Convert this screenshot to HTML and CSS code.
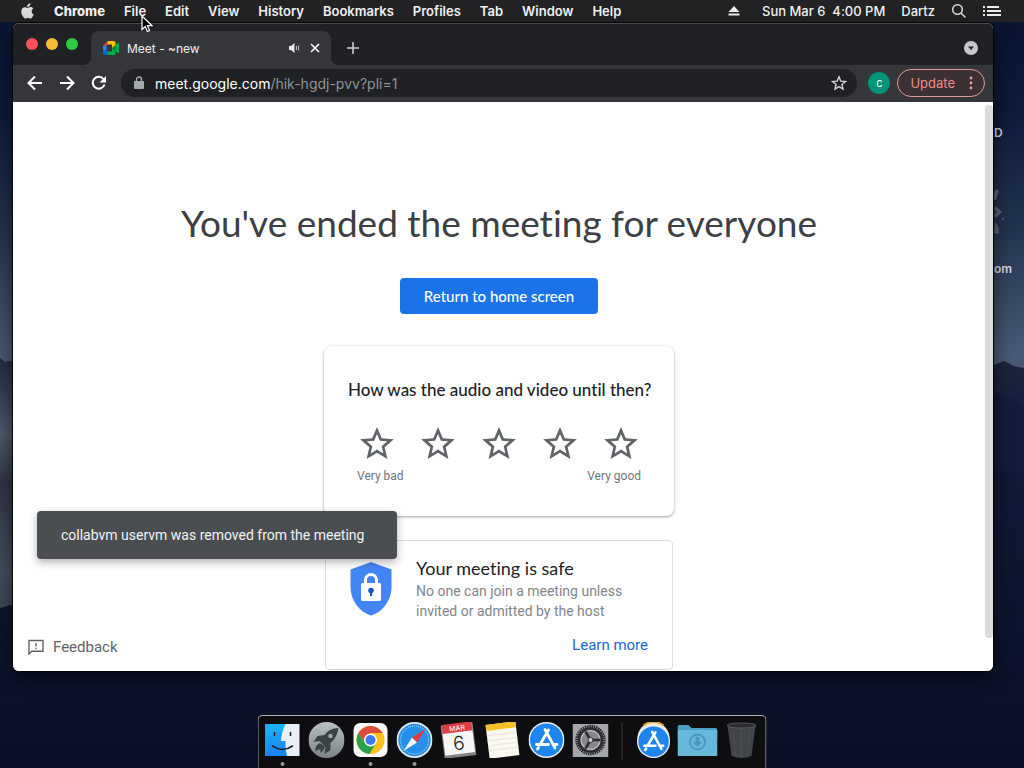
FILE: index.html
```html
<!DOCTYPE html>
<html lang="en">
<head>
<meta charset="utf-8">
<title>Meet - ~new</title>
<link rel="stylesheet" href="styles.css">
</head>
<body>
<div class="desktop">
  <svg class="wallpaper" viewBox="0 0 1024 768" preserveAspectRatio="none" aria-hidden="true">
    <defs>
      <linearGradient id="sky" x1="0" y1="0" x2="0" y2="1">
        <stop offset="0" stop-color="#0a1430"/><stop offset=".15" stop-color="#0e1a3c"/><stop offset=".3" stop-color="#24344f"/><stop offset=".46" stop-color="#4a5a76"/><stop offset=".7" stop-color="#414a60"/><stop offset="1" stop-color="#3a4358"/>
      </linearGradient>
      <linearGradient id="land" x1="0" y1="0" x2="0" y2="1">
        <stop offset="0" stop-color="#1c2440"/><stop offset=".25" stop-color="#121938"/><stop offset="1" stop-color="#0a1126"/>
      </linearGradient>
      <linearGradient id="mist" x1="0" y1="0" x2="0" y2="1">
        <stop offset="0" stop-color="#252c45"/><stop offset=".12" stop-color="#353c54"/><stop offset=".3" stop-color="#515b6e"/><stop offset=".5" stop-color="#2f3649"/><stop offset=".85" stop-color="#464f61"/><stop offset="1" stop-color="#3c4558"/>
      </linearGradient>
    </defs>
    <rect width="1024" height="768" fill="url(#sky)"/>
    <path fill="url(#mist)" d="M0 358 L5 362 L10 361 L40 370 V610 H0Z"/>
    <path fill="url(#land)" d="M0 608 L14 604 L500 640 L985 370 L994 365 L1004 361 L1014 366 L1024 368 V768 H0Z"/>
    <path fill="#141a3a" d="M990 392 Q1010 396 1024 408 V470 H990Z"/>
  </svg>

  <div class="desk-icons">
    <span class="desk-label">D</span>
    <span class="desk-glyphs">
      <svg width="12" height="48" viewBox="0 0 12 48" fill="#59647b"><path d="M2 0l3 2-3 9H0V4zM2 17l6 6-6 6-2-3 3-3-3-3zM1 34q5 3 4 11l-5-1z"/><circle cx="9" cy="30" r="1"/></svg>
    </span>
    <span class="desk-label">om</span>
  </div>

  <header class="menubar">
    <nav class="menus">
      <svg class="apple" width="15" height="16" viewBox="0 0 15 16" fill="#dedede"><path d="M10.4.2c.1 1.100-.3 2-1 2.700-.6.700-1.500 1.100-2.300 1C7 2.900 7.400 2 8 1.400 8.600.7 9.600.3 10.400.2zM13.400 5.600c-1.200.8-1.700 1.700-1.700 2.900 0 1.400.8 2.500 2 3-.3.900-.7 1.700-1.300 2.500-.7 1-1.300 1.600-2.200 1.600-.8 0-1.200-.5-2.300-.5s-1.500.5-2.300.5c-.9 0-1.600-.7-2.300-1.700C2.200 12.500 1.300 10.900 1.300 8.500c0-2.700 1.700-4.300 3.500-4.300 1.100 0 1.900.7 2.700.7.700 0 1.600-.8 3-.8 1.100 0 2.200.5 2.900 1.500z"/></svg>
      <button class="menu app">Chrome</button>
      <button class="menu">File</button>
      <button class="menu">Edit</button>
      <button class="menu">View</button>
      <button class="menu">History</button>
      <button class="menu">Bookmarks</button>
      <button class="menu">Profiles</button>
      <button class="menu">Tab</button>
      <button class="menu">Window</button>
      <button class="menu">Help</button>
    </nav>
    <div class="status">
      <svg class="eject" width="12" height="12" viewBox="0 0 12 12" fill="#eee"><path d="M6 1l5.500 6H.5zM.5 8.500h11v2H.5z"/></svg>
      <span class="clock">Sun Mar 6&nbsp; 4:00 PM</span>
      <span class="user">Dartz</span>
      <svg width="16" height="16" viewBox="0 0 16 16" fill="none" stroke="#ddd" stroke-width="1.500"><circle cx="6.500" cy="6.500" r="4.800"/><path d="M10 10l4.500 4.500"/></svg>
      <svg width="18" height="12" viewBox="0 0 18 12" fill="#eee"><path d="M0 1h2v2H0zM0 5h2v2H0zM0 9h2v2H0zM4 1h12v2H4zM4 5h14v2H4zM4 9h14v2H4z"/></svg>
    </div>
  </header>

  <main class="window">
    <div class="tabstrip">
      <div class="lights">
        <button class="light red" aria-label="Close window"></button>
        <button class="light yellow" aria-label="Minimise window"></button>
        <button class="light green" aria-label="Zoom window"></button>
      </div>
      <div class="tab">
        <svg width="16" height="14" viewBox="0 0 16 14"><path fill="#ea4335" d="M0 4.500L4.500 0v4.500z"/><path fill="#fbbc04" d="M4.500 0H11q1.500 0 1.500 1.500V5L9 7.500v-4H4.500z"/><path fill="#2684fc" d="M0 4.500h3.500v5H0z"/><path fill="#0066da" d="M0 9.500h4.500V14H1.500Q0 14 0 12.500z"/><path fill="#00ac47" d="M4.500 10.500H9V7l3.500 2.500v3Q12.500 14 11 14H4.500z"/><path fill="#00832d" d="M9 7l3.500-3v6z"/><path fill="#00ac47" d="M12.500 4L15 2q1-.5 1 .5v9q0 1-1 .5l-2.500-2z"/></svg>
        <span class="tab-title">Meet - ~new</span>
        <svg width="12" height="12" viewBox="0 0 12 12"><path fill="#e8eaed" d="M1 4h2l3.500-3v10L3 8H1z"/><path fill="none" stroke="#bbb" d="M8.500 4v4M10.500 3.500v5"/></svg>
        <button class="icon-btn" aria-label="Close tab"><svg width="10" height="10" viewBox="0 0 10 10" stroke="#fff" stroke-width="1.600"><path d="M1 1l8 8M9 1L1 9"/></svg></button>
      </div>
      <button class="icon-btn new-tab" aria-label="New tab"><svg width="12" height="12" viewBox="0 0 12 12" stroke="#ccc" stroke-width="1.600"><path d="M6 0v12M0 6h12"/></svg></button>
      <button class="icon-btn tab-search" aria-label="Search tabs"><svg width="14" height="14" viewBox="0 0 14 14"><circle cx="7" cy="7" r="7" fill="#c4c7cb"/><path fill="#202124" d="M4 5.500h6L7 9z"/></svg></button>
    </div>

    <div class="toolbar">
      <div class="nav">
        <button class="icon-btn" aria-label="Back"><svg width="16" height="16" viewBox="0 0 16 16" fill="none" stroke="#fff" stroke-width="2"><path d="M15 8H2M8 1.500L1.500 8 8 14.500"/></svg></button>
        <button class="icon-btn" aria-label="Forward"><svg width="16" height="16" viewBox="0 0 16 16" fill="none" stroke="#fff" stroke-width="2"><path d="M1 8h13M8 1.500L14.500 8 8 14.500"/></svg></button>
        <button class="icon-btn" aria-label="Reload"><svg width="16" height="16" viewBox="0 0 16 16"><path fill="none" stroke="#fff" stroke-width="2" d="M13.500 9.500A6 6 0 1 1 12.500 4"/><path fill="#fff" d="M15 1v6.500H8.500z"/></svg></button>
      </div>
      <div class="omnibox">
        <svg width="10" height="14" viewBox="0 0 10 14"><rect y="5" width="10" height="8" rx="1" fill="#a5a8ac"/><path fill="none" stroke="#a5a8ac" stroke-width="1.400" d="M2.500 5.500V3.500a2.500 2.500 0 0 1 5 0v2"/></svg>
        <a class="url" href="#"><span class="host">meet.google.com</span>/hik-hgdj-pvv?pli=1</a>
        <button class="icon-btn" aria-label="Bookmark this tab"><svg width="16" height="16" viewBox="0 0 16 16" fill="none" stroke="#d0d2d5" stroke-width="1.400"><path d="M8 1.800l1.800 4.300 4.700.4-3.600 3 1.100 4.600L8 11.600l-4 2.500 1.100-4.600-3.600-3 4.700-.4z"/></svg></button>
      </div>
      <button class="avatar" aria-label="Profile">c</button>
      <button class="update"><span>Update</span><svg width="4" height="14" viewBox="0 0 4 14" fill="#f0a09a"><circle cx="2" cy="2" r="1.400"/><circle cx="2" cy="7" r="1.400"/><circle cx="2" cy="12" r="1.400"/></svg></button>
    </div>

    <section class="page">
      <div class="content">
        <h1 class="headline">You've ended the meeting for everyone</h1>
        <button class="primary">Return to home screen</button>
        <div class="rating">
          <h2 class="question">How was the audio and video until then?</h2>
          <div class="stars">
            <button class="icon-btn" aria-label="1 star"><svg class="star" viewBox="2 2 20 19"><use href="#star"/></svg></button>
            <button class="icon-btn" aria-label="2 stars"><svg class="star" viewBox="2 2 20 19"><use href="#star"/></svg></button>
            <button class="icon-btn" aria-label="3 stars"><svg class="star" viewBox="2 2 20 19"><use href="#star"/></svg></button>
            <button class="icon-btn" aria-label="4 stars"><svg class="star" viewBox="2 2 20 19"><use href="#star"/></svg></button>
            <button class="icon-btn" aria-label="5 stars"><svg class="star" viewBox="2 2 20 19"><use href="#star"/></svg></button>
          </div>
          <div class="scale"><span>Very bad</span><span>Very good</span></div>
        </div>
        <div class="safe">
          <svg class="shield" width="42" height="54" viewBox="0 0 42 54"><path fill="#4285f4" d="M21 0l20.500 7.500V25C41.500 38 33 50 21 53.500 9 50 .5 38 .5 25V7.500z"/><rect x="11" y="21" width="20" height="18" rx="1.500" fill="#fff"/><path fill="none" stroke="#fff" stroke-width="3" d="M15.500 22v-4a5.500 5.500 0 0 1 11 0v4"/><circle cx="21" cy="28.500" r="2.800" fill="#1a56c4"/><path fill="#1a56c4" d="M20 29h2.200v5H20z"/></svg>
          <div class="safe-body">
            <h2 class="safe-title">Your meeting is safe</h2>
            <p class="safe-text">No one can join a meeting unless invited or admitted by the host</p>
            <a class="learn" href="#">Learn more</a>
          </div>
        </div>
      </div>
      <div class="scroll-thumb"></div>
      <button class="feedback"><svg width="16" height="16" viewBox="0 0 16 16" fill="none" stroke="#5f6368" stroke-width="1.400"><path d="M1 15V1.500h14v10.800H3.600z"/><path d="M8 4v3.500M8 8.800v1.400"/></svg><span>Feedback</span></button>
      <div class="toast" role="status">collabvm uservm was removed from the meeting</div>
    </section>
  </main>

  <footer class="dock">
    <div class="dock-item running"><svg class="dock-icon" viewBox="0 0 36 36"><defs><linearGradient id="fb" x1="0" y1="0" x2="0" y2="1"><stop offset="0" stop-color="#1cb4fb"/><stop offset="1" stop-color="#1a80f0"/></linearGradient></defs><rect x="1" y="2" width="34" height="32" fill="#e9f0f7"/><path fill="url(#fb)" d="M1 2h20q-4 8-4.500 17H21q-.5 8 1.500 15H1z"/><path fill="none" stroke="#16222e" stroke-width="1.600" stroke-linecap="round" d="M8 24q10 7 20 0M10 10.500v3M26 10.500v3"/></svg></div>
    <div class="dock-item"><svg class="dock-icon" viewBox="0 0 36 36"><defs><linearGradient id="lp" x1="0" y1="0" x2="0" y2="1"><stop offset="0" stop-color="#b9c0c3"/><stop offset="1" stop-color="#7c8387"/></linearGradient></defs><circle cx="18" cy="18" r="18" fill="url(#lp)"/><path fill="#3b4246" d="M30 6q-9 0-14 7l-7 1-4 6 6-1 6 6-1 7 6-4 0-7q7-6 8-15z"/><circle cx="22" cy="14" r="2.200" fill="#a3aaad"/><path fill="#3b4246" d="M11 21q-5 3-4 8l5-2 0 4q5-4 4-7z"/></svg></div>
    <div class="dock-item running"><svg class="dock-icon" viewBox="0 0 36 36"><rect x="1" y="1" width="34" height="34" rx="7" fill="#fafafa"/><circle cx="18" cy="18" r="14" fill="#fbc116"/><path fill="#2aa14b" d="M5.900 11A14 14 0 0 0 17 32l6.500-11L18 18l-5.500 3z"/><path fill="#dd4b3e" d="M5.900 11A14 14 0 0 1 30.100 11H18l-5.500 10z"/><circle cx="18" cy="18" r="6.500" fill="#fff"/><circle cx="18" cy="18" r="5" fill="#3b7ded"/></svg></div>
    <div class="dock-item running"><svg class="dock-icon" viewBox="0 0 36 36"><circle cx="18" cy="18" r="18" fill="#e3e8ec"/><circle cx="18" cy="18" r="16.200" fill="#2490ea"/><circle cx="18" cy="18" r="14" fill="none" stroke="#9bd0f7" stroke-width="1.400" stroke-dasharray=".8 1.300"/><path fill="#e4373a" d="M29 7L20.500 20.500l-5-5z"/><path fill="#f4f4f4" d="M7 29l8.500-13.500 5 5z"/></svg></div>
    <div class="dock-item"><svg class="dock-icon" viewBox="0 0 36 36"><g transform="rotate(-7 18 18)"><rect x="2" y="2" width="32" height="33" fill="#85817f"/><rect x="3" y="2" width="30" height="30" fill="#f6f6f6"/><rect x="3" y="1" width="30" height="9" fill="#dd3c41"/><text class="cal-month" x="18" y="8.500">MAR</text><text class="cal-day" x="18" y="28">6</text></g></svg></div>
    <div class="dock-item"><svg class="dock-icon" viewBox="0 0 36 36"><g transform="rotate(-7 18 18)"><rect x="3" y="1" width="30" height="34" fill="#faf8ef"/><path fill="#f5bf28" d="M3 1h30v6H3z"/><path stroke="#e4e1d6" stroke-width=".8" d="M3 12h30M3 17h30M3 22h30M3 27h30"/></g></svg></div>
    <div class="dock-item"><svg class="dock-icon" viewBox="0 0 36 36"><use href="#appstore"/></svg></div>
    <div class="dock-item"><svg class="dock-icon" viewBox="0 0 36 36"><rect y="2" width="36" height="33" fill="#a4a7a9"/><circle cx="18" cy="18" r="14" fill="none" stroke="#26282a" stroke-width="2.500" stroke-dasharray="1.500 .8"/><circle cx="18" cy="18" r="13" fill="#2c2e30"/><circle cx="18" cy="18" r="9.500" fill="#85888a" stroke="#b5b8ba" stroke-width="1.500"/><path stroke="#2c2e30" stroke-width="2.500" fill="none" d="M18 18h10M18 18l-5-8.500M18 18l-5 8.500"/><circle cx="18" cy="18" r="2.500" fill="#cfd1d2" stroke="#2c2e30"/></svg></div>
    <div class="dock-divider"></div>
    <div class="dock-item"><svg class="dock-icon" viewBox="0 0 36 36"><circle cx="18" cy="16" r="16" fill="#f1e8dc"/><path stroke="#e7a53a" stroke-width="2" fill="none" d="M8 3.500A16 16 0 0 1 28 3.500"/><g transform="translate(1.500 3) scale(.92)"><use href="#appstore"/></g></svg></div>
    <div class="dock-item folder"><svg class="dock-icon wide" viewBox="0 0 40 36"><path fill="#4a9fc4" d="M0 5q0-2 2-2h9l3 3h24q2 0 2 2v8H0z"/><rect y="8" width="40" height="26" rx="1.500" fill="#67b9dc"/><circle cx="20" cy="20" r="7.500" fill="none" stroke="#4998bb" stroke-width="1.800"/><path fill="#4998bb" d="M18.200 15h3.600v5H25l-5 5-5-5h3.200z"/></svg></div>
    <div class="dock-item"><svg class="dock-icon" viewBox="0 0 36 36"><path fill="#424547" d="M4 3h28l-4 31q-10 4-20 0z"/><ellipse cx="18" cy="3.500" rx="14.500" ry="2.500" fill="#2a2c2e" stroke="#55595b"/><path stroke="#4b4f51" d="M10 8l2 26M18 8v27M26 8l-2 26"/></svg></div>
  </footer>

  <svg class="cursor" width="12" height="18" viewBox="0 0 12 18" aria-hidden="true"><path fill="#000" stroke="#fff" stroke-width="1.200" d="M1 1v13.500l3.200-3 2.200 5 2.200-1-2.200-4.800H11z"/></svg>

  <svg class="symbols" width="0" height="0" aria-hidden="true">
    <symbol id="star" viewBox="0 0 24 24" width="24" height="24" overflow="visible"><path fill="#5f6368" d="M22 9.240l-7.190-.62L12 2 9.190 8.630 2 9.240l5.460 4.730L5.820 21 12 17.270 18.180 21l-1.630-7.030L22 9.240zM12 15.400l-3.760 2.270 1-4.280-3.320-2.880 4.380-.38L12 6.100l1.710 4.040 4.380.38-3.320 2.880 1 4.280L12 15.400z"/></symbol>
    <symbol id="appstore" viewBox="0 0 36 36" width="36" height="36"><circle cx="18" cy="18" r="18" fill="#e8edf2"/><circle cx="18" cy="18" r="16.500" fill="#1c85ee"/><path fill="none" stroke="#fff" stroke-width="2.800" stroke-linecap="round" d="M16.500 7.500L26.500 26M20 8L11.500 22.500M8 22.500h12M25 22.500h3.500M10 25.500l-1 1.500"/></symbol>
  </svg>
</div>
</body>
</html>
```
FILE: styles.css
```css
* { box-sizing: border-box; }

body {
  margin: 0;
  font-family: Inter, "Liberation Sans", sans-serif;
  font-variant-ligatures: none;
}

h1, h2, p { margin: 0; font-weight: 400; }

button {
  border: 0;
  padding: 0;
  background: none;
  color: inherit;
  font: inherit;
}

a { text-decoration: none; }
svg { flex: none; display: block; }

.desktop {
  position: relative;
  display: flex;
  flex-direction: column;
  height: 100vh;
  overflow: hidden;
  background: #0b1126;
}

.wallpaper {
  position: absolute;
  inset: 0;
  width: 100%;
  height: 100%;
}

.symbols { position: absolute; }

.desk-icons {
  position: absolute;
  top: 125px;
  right: 8px;
  width: 24px;
  display: flex;
  flex-direction: column;
  color: #d5d9e2;
  font-size: 12px;
  font-weight: 600;
  line-height: 16px;
}

.desk-label { padding-left: 2px; }
.desk-glyphs { padding: 48px 0 24px 2px; }

/* Menu bar */

.menubar {
  position: relative;
  display: flex;
  justify-content: space-between;
  align-items: center;
  height: 22px;
  padding: 0 23px 0 20px;
  background: #232325;
  color: #f4f4f4;
  font-size: 13px;
  font-weight: 600;
}

.menus, .status { display: flex; align-items: center; }
.menus { gap: 19px; }
.app { font-weight: 800; }
.status { gap: 16px; font-weight: 500; }
.eject { margin-right: 6px; }

/* Browser window */

.window {
  position: relative;
  flex: 1;
  display: flex;
  flex-direction: column;
  min-height: 0;
  margin: 1px 31px 97px 13px;
  border-radius: 6px;
  overflow: hidden;
  background: #fff;
  box-shadow: 0 0 0 1px #050505, 0 8px 20px #000000a0;
}

.tabstrip {
  display: flex;
  align-items: flex-end;
  height: 42px;
  padding: 0 15px 0 13px;
  border-top: 1px solid #4b4c4e;
  background: #202124;
}

.lights {
  display: flex;
  gap: 8px;
  align-self: flex-start;
  padding: 14px 13px 0 0;
}

.light { width: 12px; height: 12px; border-radius: 50%; }
.red { background: #fc4f5b; }
.yellow { background: #f5bd34; }
.green { background: #2fca44; }

.tab {
  position: relative;
  display: flex;
  align-items: center;
  width: 240px;
  height: 34px;
  padding: 0 11px 0 12px;
  border-radius: 8px 8px 0 0;
  background: #35363a;
  color: #f1f1f1;
  font-size: 12px;
}

.tab::before, .tab::after {
  content: "";
  position: absolute;
  bottom: 0;
  width: 8px;
  height: 8px;
}

.tab::before { left: -8px; background: radial-gradient(circle at 0 0, transparent 8px, #35363a 8px); }
.tab::after { right: -8px; background: radial-gradient(circle at 100% 0, transparent 8px, #35363a 8px); }

.tab-title { flex: 1; padding-left: 8px; }

.icon-btn { display: flex; align-items: center; justify-content: center; }
.tab .icon-btn { padding-left: 10px; }
.new-tab { height: 34px; padding-left: 16px; }
.tab-search { height: 34px; margin-left: auto; }

.toolbar {
  display: flex;
  align-items: center;
  height: 37px;
  padding: 0 8px 1px 14px;
  background: #35363a;
}

.nav { display: flex; gap: 16px; padding-right: 14px; }

.omnibox {
  flex: 1;
  display: flex;
  align-items: center;
  height: 28px;
  padding: 0 10px 0 13px;
  border-radius: 14px;
  background: #202124;
}

.url {
  flex: 1;
  padding-left: 11px;
  color: #909499;
  font-size: 14px;
}

.host { color: #fff; }

.avatar {
  width: 22px;
  height: 22px;
  margin: 0 7px 0 11px;
  border-radius: 50%;
  background: #009478;
  color: #fff;
  font-size: 11px;
}

.update {
  display: flex;
  align-items: center;
  gap: 14px;
  height: 28px;
  padding: 0 11px 0 12px;
  border: 1px solid #e49a9a;
  border-radius: 14px;
  background: #3b3033;
  color: #f28b82;
  font-size: 13px;
}

/* Meeting page */

.page {
  position: relative;
  flex: 1;
  min-height: 0;
  overflow: hidden;
  background: #fff;
}

.content {
  display: flex;
  flex-direction: column;
  align-items: center;
  padding: 99px 8px 0 0;
}

.headline {
  color: #3c4043;
  font-family: Lato, sans-serif;
  font-size: 37px;
  line-height: 44px;
}

.primary {
  height: 36px;
  margin-top: 33px;
  padding: 0 24px;
  border-radius: 4px;
  background: #1a73e8;
  color: #fff;
  font-family: Lato, sans-serif;
  font-size: 15px;
  font-weight: 500;
}

.rating {
  width: 350px;
  margin-top: 32px;
  padding: 32px 24px;
  border-radius: 8px;
  box-shadow: 0 1px 3px 1px #3c404326, 0 1px 2px #3c40434d;
}

.question {
  color: #202124;
  font-family: Lato, sans-serif;
  font-size: 17px;
  font-weight: 500;
  line-height: 24px;
  text-align: center;
  white-space: nowrap;
}

.stars {
  display: flex;
  justify-content: space-between;
  padding: 25px 12px 0;
}

.star { width: 34px; height: 32px; }

.scale {
  display: flex;
  justify-content: space-between;
  padding: 9px 9px 0;
  color: #70757a;
  font-family: Roboto, sans-serif;
  font-size: 12px;
  line-height: 16px;
}

.safe {
  display: flex;
  align-items: flex-start;
  gap: 24px;
  width: 348px;
  margin-top: 24px;
  padding: 15px 24px 12px;
  border: 1px solid #dadce0;
  border-radius: 4px;
}

.shield { margin-top: 6px; }
.safe-body { flex: 1; display: flex; flex-direction: column; }

.safe-title {
  color: #202124;
  font-family: Lato, sans-serif;
  font-size: 18px;
  line-height: 24px;
}

.safe-text {
  margin-top: 1px;
  color: #80868b;
  font-family: Roboto, sans-serif;
  font-size: 14px;
  line-height: 20px;
}

.learn {
  align-self: flex-end;
  margin-top: 12px;
  color: #1a67d2;
  font-family: Roboto, sans-serif;
  font-size: 15px;
  line-height: 24px;
}

.scroll-thumb {
  position: absolute;
  top: 3px;
  right: 0;
  bottom: 33px;
  width: 8px;
  border-radius: 4px;
  background: #dadce0;
}

.feedback {
  position: absolute;
  left: 15px;
  bottom: 14px;
  display: flex;
  align-items: center;
  gap: 9px;
  color: #5f6368;
  font-family: Roboto, sans-serif;
  font-size: 15px;
  line-height: 20px;
}

.toast {
  position: absolute;
  left: 24px;
  bottom: 112px;
  min-width: 360px;
  padding: 14px 24px;
  border-radius: 4px;
  background: #4a4e51;
  color: #f1f3f4;
  font-family: Roboto, sans-serif;
  font-size: 14px;
  line-height: 20px;
  box-shadow: 0 3px 8px #00000050;
}

/* Dock */

.dock {
  position: absolute;
  left: 50%;
  bottom: 0;
  display: flex;
  gap: 8px;
  height: 53px;
  padding: 6px 6px 0;
  transform: translateX(-50%);
  border: 1px solid #a9acb3;
  border-bottom: 0;
  border-radius: 5px 5px 0 0;
  background: #0e0e10;
}

.dock-item { position: relative; width: 36px; }
.dock-icon { width: 36px; height: 36px; }
.folder { display: flex; justify-content: center; }
.wide { width: 40px; }

.running::after {
  content: "";
  position: absolute;
  left: 16px;
  bottom: 2px;
  width: 4px;
  height: 4px;
  border-radius: 50%;
  background: #97979a;
}

.dock-divider {
  width: 1px;
  height: 38px;
  margin: 0 5px;
  background: #3c3c3e;
}

.cal-month {
  fill: #fff;
  font-family: Inter, sans-serif;
  font-size: 7px;
  text-anchor: middle;
}

.cal-day {
  fill: #222;
  font-family: Inter, sans-serif;
  font-size: 19px;
  font-weight: 300;
  text-anchor: middle;
}

.cursor {
  position: absolute;
  left: 141px;
  top: 15px;
}
```
